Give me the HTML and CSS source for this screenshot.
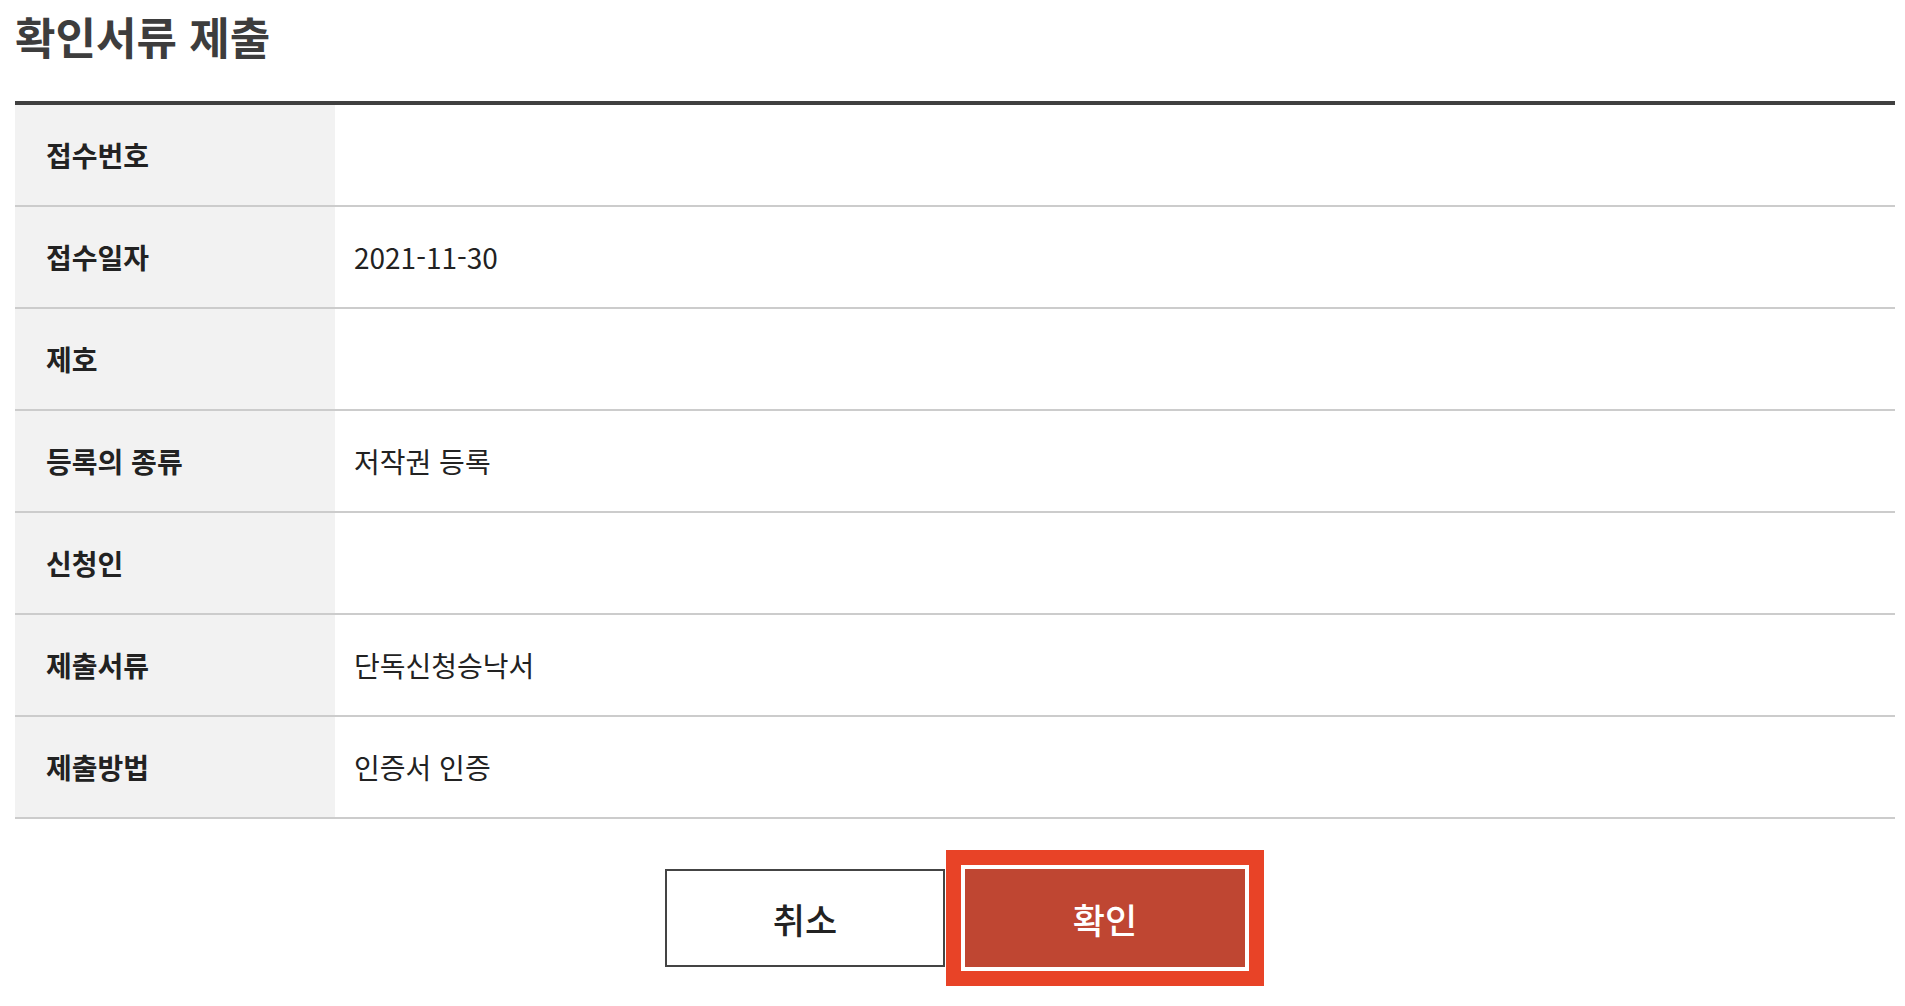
FILE: index.html
```html
<!DOCTYPE html>
<html lang="ko">
<head>
    <meta charset="UTF-8">
    <meta name="viewport" content="width=device-width, initial-scale=1.0">
    <title>확인서류 제출</title>
    <link rel="stylesheet" href="styles.css">
</head>
<body>

    <div class="container">
        <h1 class="page-title">확인서류 제출</h1>

        <table class="info-table">
            <tr>
                <th>접수번호</th>
                <td></td>
            </tr>
            <tr>
                <th>접수일자</th>
                <td>2021-11-30</td>
            </tr>
            <tr>
                <th>제호</th>
                <td></td>
            </tr>
            <tr>
                <th>등록의 종류</th>
                <td>저작권 등록</td>
            </tr>
            <tr>
                <th>신청인</th>
                <td></td>
            </tr>
            <tr>
                <th>제출서류</th>
                <td>단독신청승낙서</td>
            </tr>
            <tr>
                <th>제출방법</th>
                <td>인증서 인증</td>
            </tr>
        </table>

        <div class="btn-area">
            <button type="button" class="btn btn-cancel">취소</button>
            <button type="button" class="btn btn-ok">확인</button>
        </div>
    </div>

</body>
</html>
```

FILE: styles.css
```css
body {
    margin: 0;
    font-family: "Noto Sans CJK KR", "Noto Sans", sans-serif;
    color: #222;
    background: #fff;
}
.container {
    padding: 0 10px 39px 15px;
}
.page-title {
    margin: 0;
    padding-top: 5px;
    height: 96px;
    font-size: 44px;
    line-height: 62px;
    font-weight: 700;
    color: #3d3d3d;
}
.info-table {
    width: 100%;
    border-collapse: collapse;
    border-top: 4px solid #404040;
}
.info-table th,
.info-table td {
    height: 100px;
    padding: 0;
    border-bottom: 2px solid #ccc;
    font-size: 28px;
    text-align: left;
    vertical-align: middle;
}
.info-table th {
    width: 320px;
    padding-left: 31px;
    box-sizing: border-box;
    background-color: #f2f2f2;
    font-weight: 700;
    color: #222;
}
.info-table td {
    padding-left: 19px;
    font-weight: 400;
    color: #222;
}
.btn-area {
    display: flex;
    justify-content: center;
    gap: 20px;
    margin-top: 50px;
}
.btn {
    width: 280px;
    height: 98px;
    font-family: inherit;
    font-size: 35px;
    font-weight: 500;
    cursor: pointer;
}
.btn-cancel {
    background: #fff;
    border: 2px solid #444;
    color: #222;
}
.btn-ok {
    background: #bf4632;
    border: 0;
    color: #fff;
    box-shadow: 0 0 0 4px #fff, 0 0 0 19px #e84327;
}
```
